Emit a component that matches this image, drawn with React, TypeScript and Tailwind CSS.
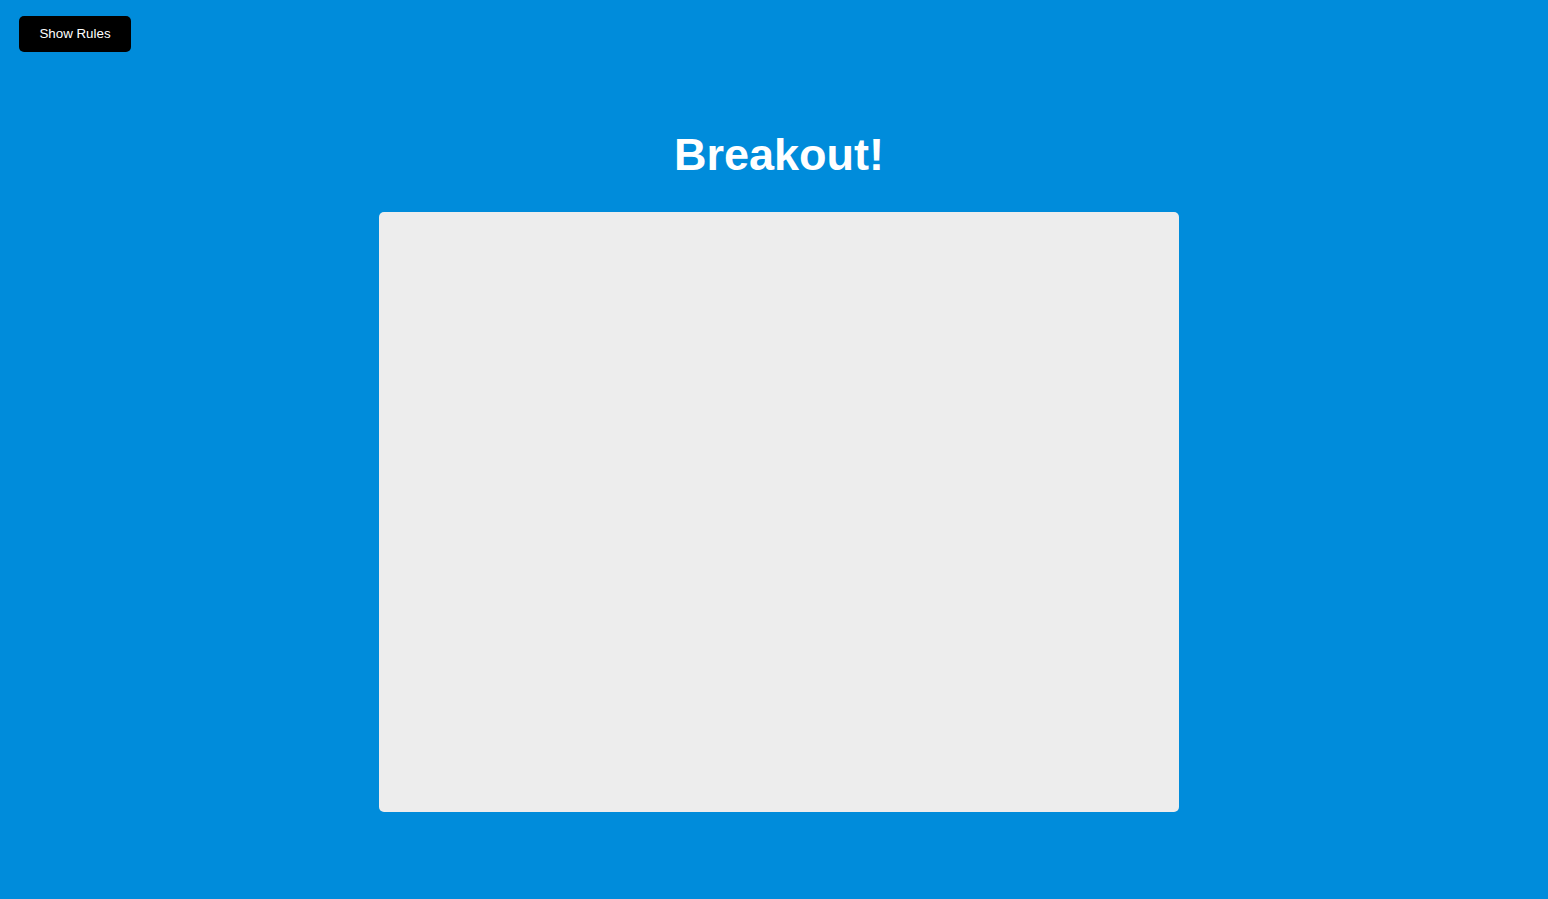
import React from "react";

export default function App() {
  return (
    <div
      className="relative min-h-screen w-full bg-[#008cdb] flex flex-col items-center pl-[10px]"
      style={{ fontFamily: '"Liberation Sans", Arial, sans-serif' }}
    >
      <button className="absolute top-[16px] left-[19px] w-[112px] h-[36px] bg-black text-white text-[13.33px] leading-[16px] rounded-[5px] border-0 cursor-pointer">
        Show Rules
      </button>
      <h1 className="mt-[129px] mb-[31px] text-white text-[45px] font-bold leading-[52px]">
        Breakout!
      </h1>
      <div className="w-[800px] h-[600px] bg-[#ededed] rounded-[5px]" />
    </div>
  );
}
